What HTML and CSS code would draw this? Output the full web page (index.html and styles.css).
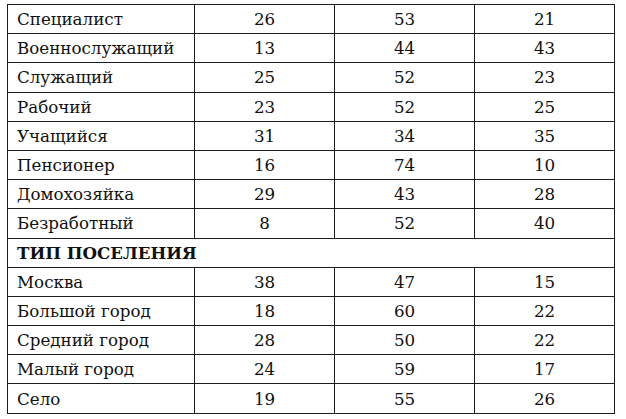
FILE: index.html
```html
<!DOCTYPE html>
<html lang="ru">
<head>
<meta charset="utf-8">
<link rel="stylesheet" href="styles.css">
</head>
<body>
<table class="data">
<colgroup><col class="c1"><col class="cn"><col class="cn"><col class="cn"></colgroup>
<tbody>
<tr><td class="label">Специалист</td><td>26</td><td>53</td><td>21</td></tr>
<tr><td class="label">Военнослужащий</td><td>13</td><td>44</td><td>43</td></tr>
<tr><td class="label">Служащий</td><td>25</td><td>52</td><td>23</td></tr>
<tr><td class="label">Рабочий</td><td>23</td><td>52</td><td>25</td></tr>
<tr><td class="label">Учащийся</td><td>31</td><td>34</td><td>35</td></tr>
<tr><td class="label">Пенсионер</td><td>16</td><td>74</td><td>10</td></tr>
<tr><td class="label">Домохозяйка</td><td>29</td><td>43</td><td>28</td></tr>
<tr><td class="label">Безработный</td><td>8</td><td>52</td><td>40</td></tr>
<tr><td class="section" colspan="4">ТИП ПОСЕЛЕНИЯ</td></tr>
<tr><td class="label">Москва</td><td>38</td><td>47</td><td>15</td></tr>
<tr><td class="label">Большой город</td><td>18</td><td>60</td><td>22</td></tr>
<tr><td class="label">Средний город</td><td>28</td><td>50</td><td>22</td></tr>
<tr><td class="label">Малый город</td><td>24</td><td>59</td><td>17</td></tr>
<tr><td class="label">Село</td><td>19</td><td>55</td><td>26</td></tr>
</tbody>
</table>
</body>
</html>
```
FILE: styles.css
```css
html, body {
  margin: 0;
  padding: 0;
  background: #ffffff;
}
body {
  padding: 4px 0 0 7px;
  font-family: "DejaVu Serif", "Liberation Serif", serif;
  color: #111111;
}
.data {
  border-collapse: collapse;
  table-layout: fixed;
  width: 608px;
  font-size: 16.7px;
}
.c1 { width: 187px; }
.cn { width: 140px; }
.data td {
  border: 1.5px solid #1c1c1c;
  height: 28.2px;
  padding: 0;
  text-align: center;
  line-height: 20px;
}
.data td.label {
  text-align: left;
  padding-left: 9px;
}
.data td.section {
  text-align: left;
  padding-left: 9px;
  font-weight: bold;
}
```
